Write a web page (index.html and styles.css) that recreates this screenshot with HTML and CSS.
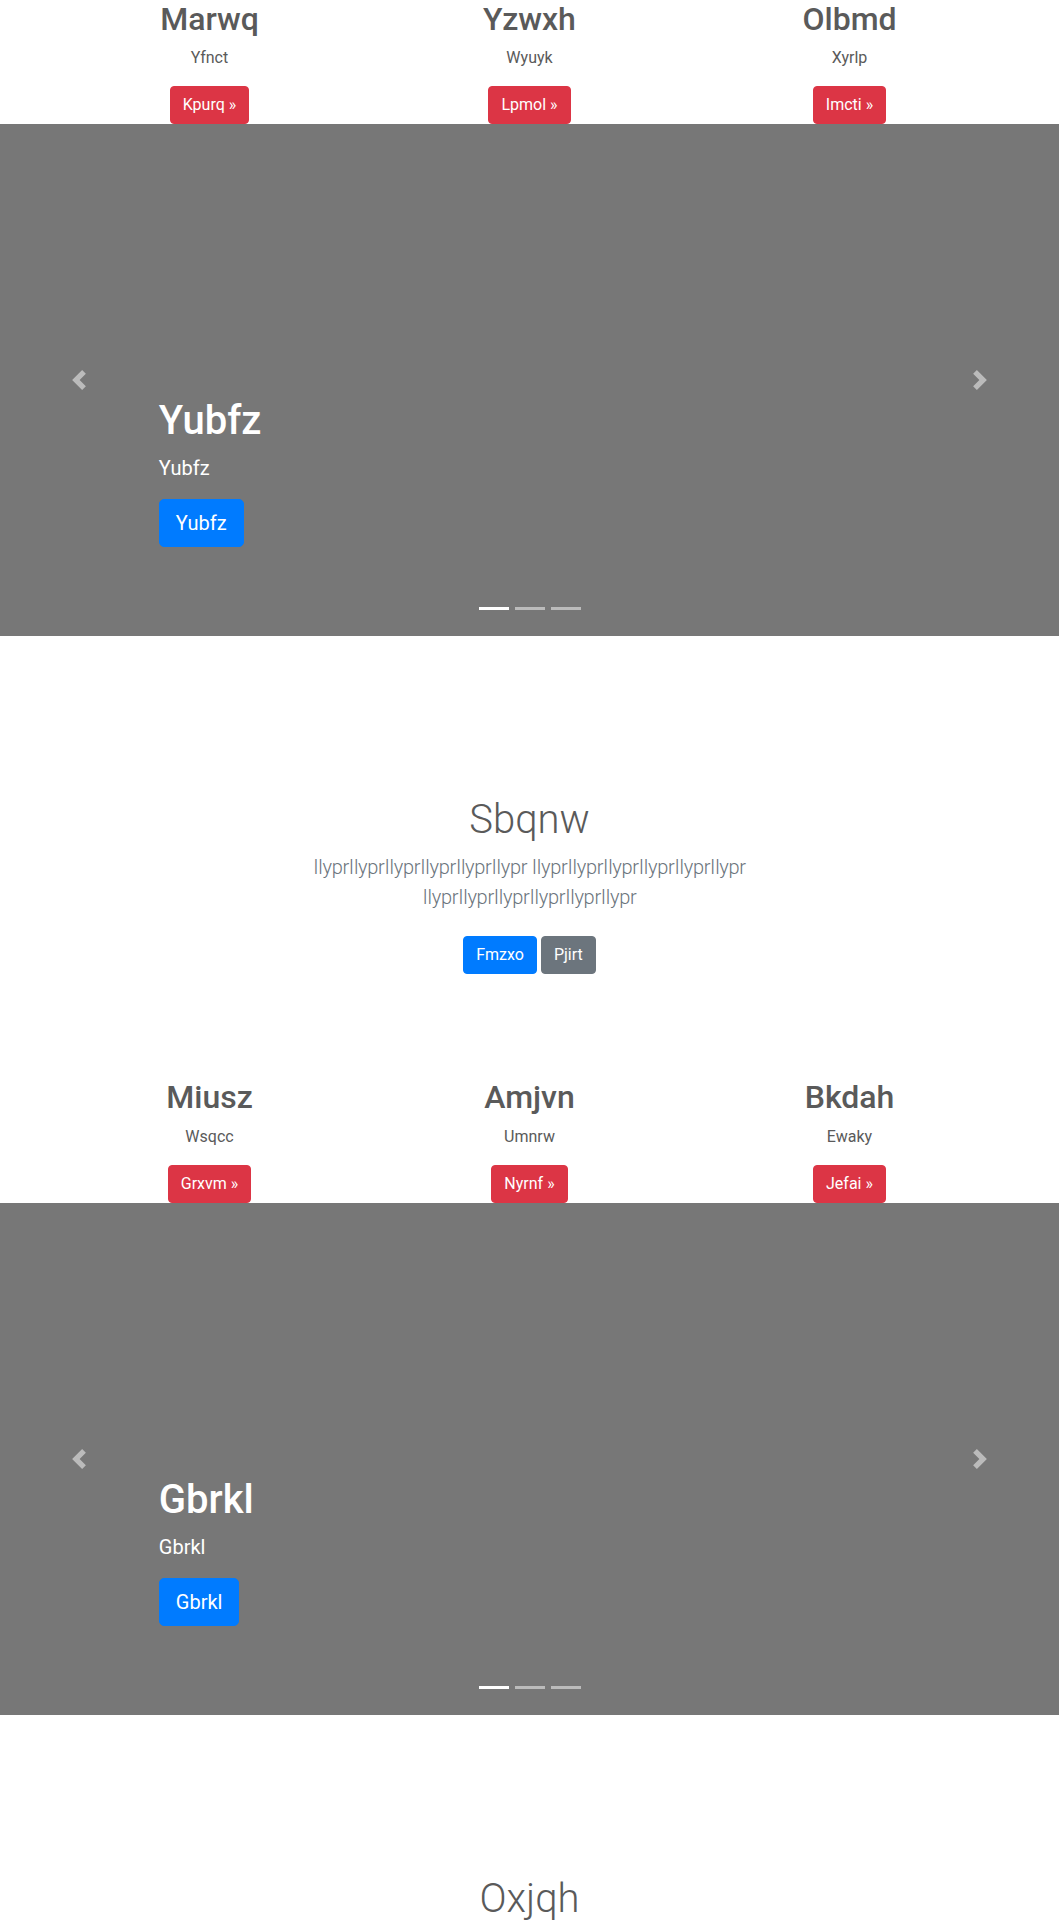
FILE: index.html
```
<!DOCTYPE html>
<html lang="en">
<head>
<meta charset="utf-8">
<title>Page</title>
<link rel="stylesheet" href="styles.css">
</head>
<body>
<main>
  <section class="marketing">
    <div class="row">
      <div class="col"><h2>Marwq</h2><p>Yfnct</p><p class="last"><a class="btn btn-danger" href="#">Kpurq &raquo;</a></p></div>
      <div class="col"><h2>Yzwxh</h2><p>Wyuyk</p><p class="last"><a class="btn btn-danger" href="#">Lpmol &raquo;</a></p></div>
      <div class="col"><h2>Olbmd</h2><p>Xyrlp</p><p class="last"><a class="btn btn-danger" href="#">Imcti &raquo;</a></p></div>
    </div>
  </section>

  <div class="carousel">
    <ol class="indicators"><li class="active"></li><li></li><li></li></ol>
    <div class="caption">
      <h1>Yubfz</h1>
      <p>Yubfz</p>
      <p class="last"><a class="btn btn-lg btn-primary" href="#">Yubfz</a></p>
    </div>
    <a class="control prev" href="#"><svg width="20" height="20" viewBox="0 0 8 8"><path fill="#fff" d="M5.25 0l-4 4 4 4 1.5-1.5-2.5-2.5 2.5-2.5-1.5-1.5z"/></svg></a>
    <a class="control next" href="#"><svg width="20" height="20" viewBox="0 0 8 8"><path fill="#fff" d="M2.75 0l-1.5 1.5 2.5 2.5-2.5 2.5 1.5 1.5 4-4-4-4z"/></svg></a>
  </div>

  <section class="jumbotron">
    <div class="jcontainer">
      <h1>Sbqnw</h1>
      <p class="lead">IlyprIlyprIlyprIlyprIlyprIlypr IlyprIlyprIlyprIlyprIlyprIlypr IlyprIlyprIlyprIlyprIlyprIlypr</p>
      <p class="last"><a class="btn btn-primary my" href="#">Fmzxo</a> <a class="btn btn-secondary my" href="#">Pjirt</a></p>
    </div>
  </section>

  <section class="marketing">
    <div class="row">
      <div class="col"><h2>Miusz</h2><p>Wsqcc</p><p class="last"><a class="btn btn-danger" href="#">Grxvm &raquo;</a></p></div>
      <div class="col"><h2>Amjvn</h2><p>Umnrw</p><p class="last"><a class="btn btn-danger" href="#">Nyrnf &raquo;</a></p></div>
      <div class="col"><h2>Bkdah</h2><p>Ewaky</p><p class="last"><a class="btn btn-danger" href="#">Jefai &raquo;</a></p></div>
    </div>
  </section>

  <div class="carousel">
    <ol class="indicators"><li class="active"></li><li></li><li></li></ol>
    <div class="caption">
      <h1>Gbrkl</h1>
      <p>Gbrkl</p>
      <p class="last"><a class="btn btn-lg btn-primary" href="#">Gbrkl</a></p>
    </div>
    <a class="control prev" href="#"><svg width="20" height="20" viewBox="0 0 8 8"><path fill="#fff" d="M5.25 0l-4 4 4 4 1.5-1.5-2.5-2.5 2.5-2.5-1.5-1.5z"/></svg></a>
    <a class="control next" href="#"><svg width="20" height="20" viewBox="0 0 8 8"><path fill="#fff" d="M2.75 0l-1.5 1.5 2.5 2.5-2.5 2.5 1.5 1.5 4-4-4-4z"/></svg></a>
  </div>

  <section class="jumbotron">
    <div class="jcontainer">
      <h1>Oxjqh</h1>
      <p class="lead">QwertQwertQwertQwertQwertQwert QwertQwertQwertQwertQwertQwert</p>
      <p class="last"><a class="btn btn-primary my" href="#">Rtyui</a> <a class="btn btn-secondary my" href="#">Asdfg</a></p>
    </div>
  </section>
</main>
</body>
</html>
```

FILE: styles.css
```
* { box-sizing: border-box; }

body {
  margin: 0;
  font-family: Roboto, "Segoe UI", "Liberation Sans", sans-serif;
  font-size: 16px;
  line-height: 1.5;
  color: #5a5a5a;
  background: #fff;
}

p { margin: 0 0 16px; }
p.last { margin-bottom: 0; }

h1, h2 { margin: 0 0 8px; line-height: 1.2; font-weight: 500; }
h1 { font-size: 40px; }
h2 { font-size: 32px; }

.btn {
  display: inline-block;
  padding: 6px 12px;
  font-size: 16px;
  line-height: 1.5;
  font-weight: 400;
  border: 1px solid transparent;
  border-radius: 4px;
  color: #fff;
  text-decoration: none;
  vertical-align: middle;
}
.btn-lg { padding: 8px 16px; font-size: 20px; border-radius: 5px; }
.btn-danger { background: #dc3545; border-color: #dc3545; }
.btn-primary { background: #007bff; border-color: #007bff; }
.btn-secondary { background: #6c757d; border-color: #6c757d; }
.my { margin: 8px 0; }

/* marketing */
.row {
  width: 960px;
  margin: 0 auto;
  display: grid;
  grid-template-columns: repeat(3, 1fr);
}
.col { padding: 0 15px; text-align: center; }

/* carousel */
.carousel {
  position: relative;
  height: 512px;
  background: #777;
  margin-bottom: 64px;
  overflow: hidden;
}
.caption {
  position: absolute;
  left: 15%;
  right: 15%;
  bottom: 53px;
  padding: 20px 0;
  color: #fff;
  text-align: left;
  z-index: 10;
}
.caption p { font-size: 20px; line-height: 1.5; }
.caption p.last { margin-bottom: 16px; }
.control {
  position: absolute;
  top: 0;
  bottom: 0;
  width: 15%;
  display: flex;
  align-items: center;
  justify-content: center;
  opacity: .5;
}
.control.prev { left: 0; }
.control.next { right: 0; }
.control svg { display: block; }

.indicators {
  position: absolute;
  left: 0;
  right: 0;
  bottom: 26px;
  margin: 0 15%;
  padding: 0;
  list-style: none;
  display: flex;
  justify-content: center;
  z-index: 15;
}
.indicators li {
  width: 30px;
  height: 3px;
  margin: 0 3px;
  background: rgba(255, 255, 255, .5);
}
.indicators li.active { background: #fff; }

/* jumbotron */
.jumbotron { padding: 96px 0; text-align: center; }
.jcontainer { max-width: 640px; margin: 0 auto; padding: 0 15px; }
.jumbotron h1 { font-weight: 300; }
.lead { font-size: 20px; font-weight: 300; color: #6c757d; letter-spacing: -0.3px; }
```
